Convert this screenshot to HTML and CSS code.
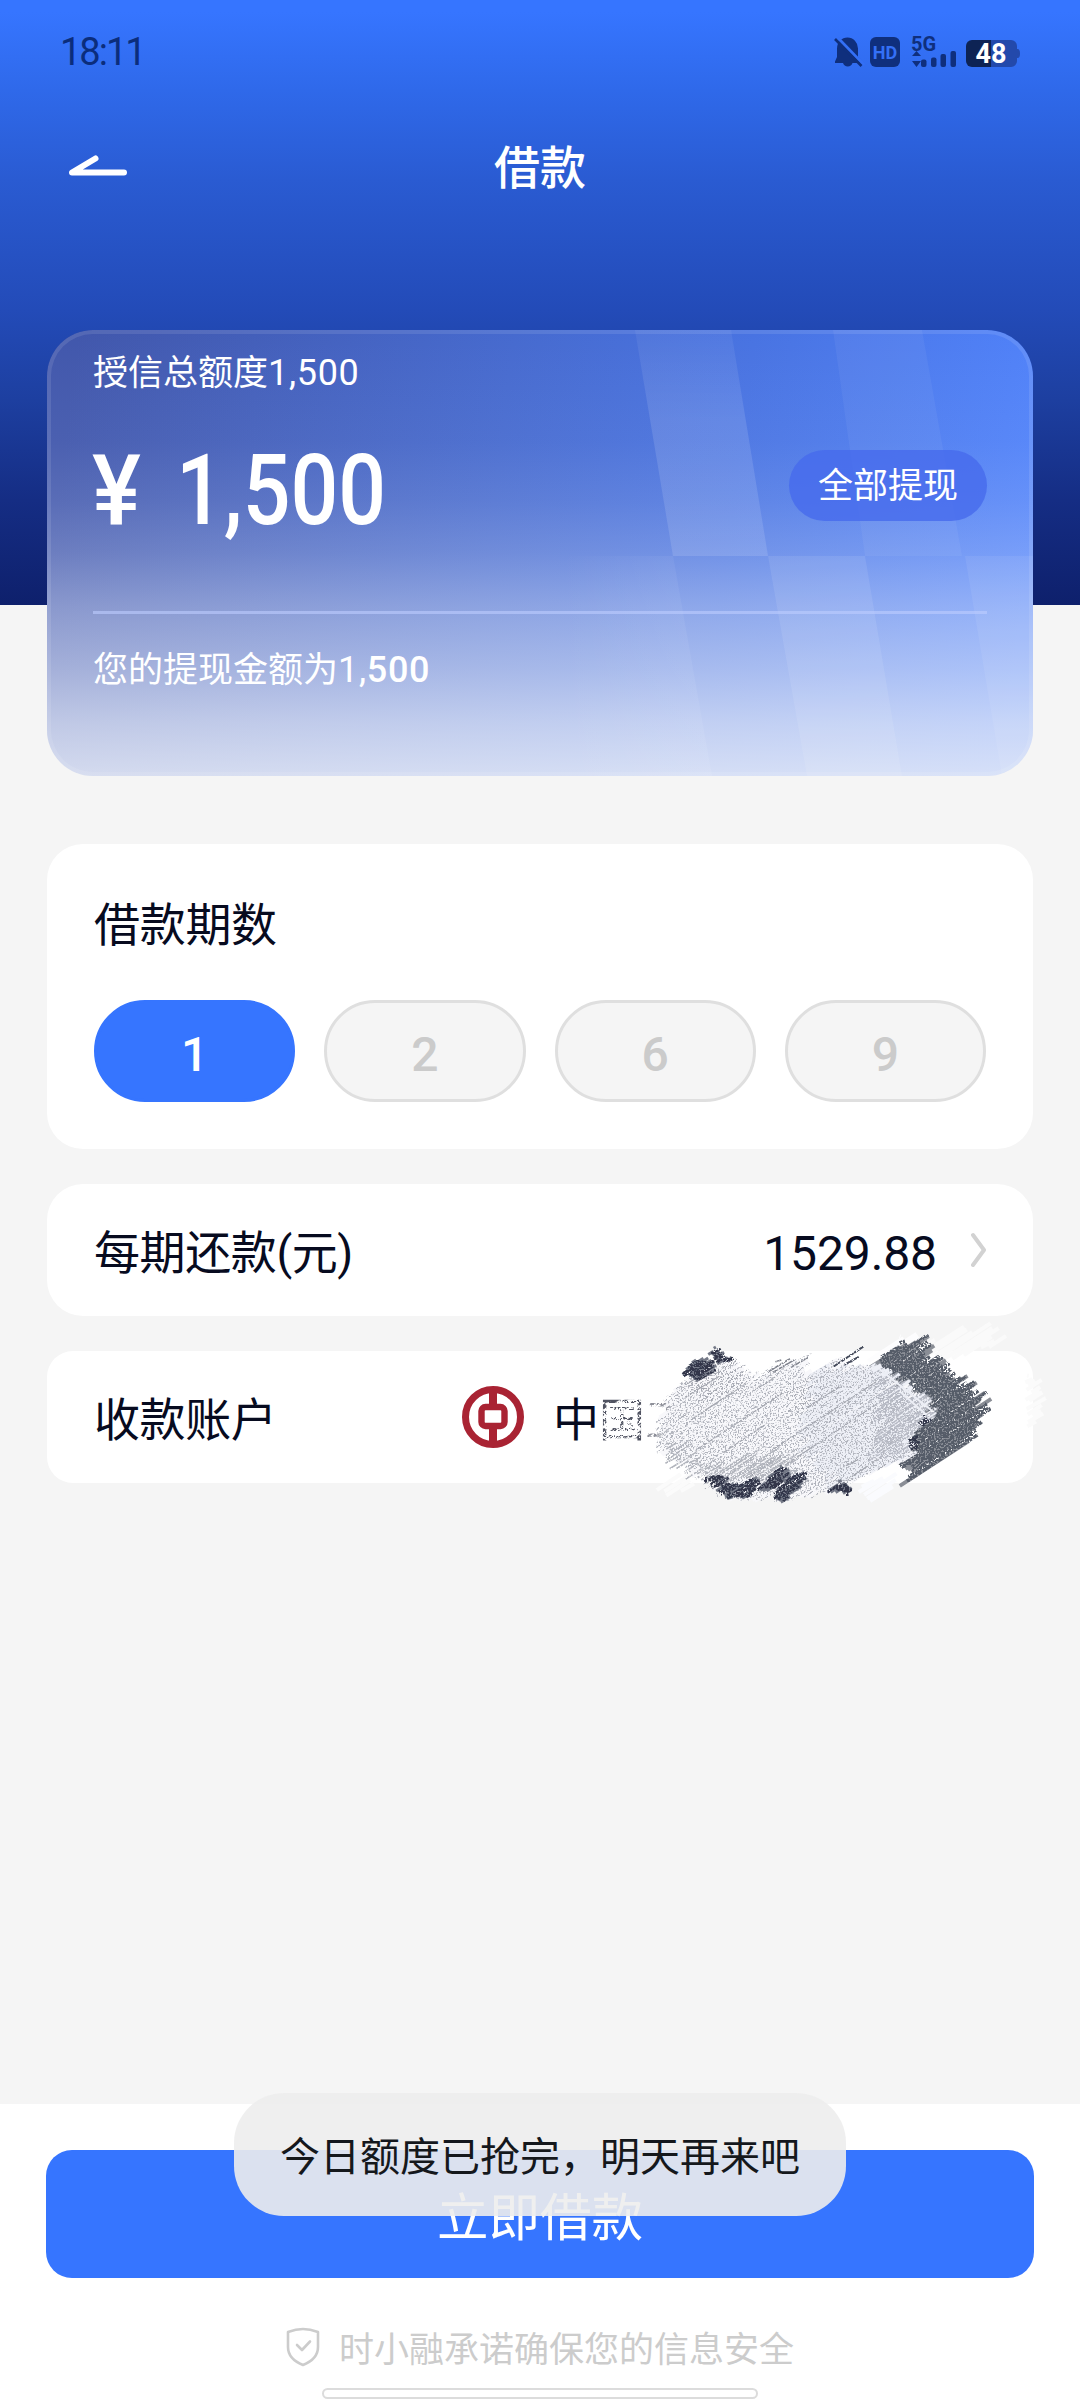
FILE: index.html
```html
<!DOCTYPE html>
<html lang="zh-CN">
<head>
<meta charset="utf-8">
<title>借款</title>
<link rel="stylesheet" href="styles.css">
</head>
<body>
<div class="screen">
  <header class="hero">
    <div class="status">
      <span class="time">18:11</span>
      <svg class="status-icons" viewBox="0 -8 190 52" width="190" height="52">
        <g fill="#0f2f7d">
          <path d="M6 23V14.500A10.500 11 0 0 1 27 14.500V23L30 27.500V29H21.500A5 5 0 0 1 12 29H4V27.500Z"/>
          <rect x="39" y="3" width="30" height="30" rx="6"/>
          <path d="M81 22l4.500-5 4.500 5zM81 27h9l-4.500 6z"/>
          <rect x="90" y="25.500" width="5.500" height="7.500" rx="2"/>
          <rect x="100" y="23.500" width="5.500" height="9.500" rx="2"/>
          <rect x="109.500" y="20" width="5.500" height="13" rx="2"/>
          <rect x="119.500" y="17" width="5.500" height="16" rx="2"/>
          <path d="M141 6h19.500v27H141a6 6 0 0 1-6-6V12a6 6 0 0 1 6-6z" fill="#0d2354"/>
          <path d="M160.500 6H180a6 6 0 0 1 6 6v3h0.500q2.500 0 2.500 4.500t-2.500 4.500H186v3a6 6 0 0 1-6 6h-19.500z" fill="#2349ab"/>
        </g>
        <path d="M6.500 3.500L33 31" stroke="#3470f6" stroke-width="3"/>
        <path d="M4 5L30.500 32" stroke="#0f2f7d" stroke-width="2.600"/>
        <text x="54" y="24.500" class="hd">HD</text>
        <text x="80" y="16.500" class="net">5G</text>
        <text x="160" y="29" class="batt">48</text>
      </svg>
    </div>
    <nav class="nav">
      <svg class="back" viewBox="0 0 60 24" width="60" height="24"><path d="M56 18.500H4L27.500 4.500" fill="none" stroke="#fff" stroke-width="6" stroke-linecap="round" stroke-linejoin="round"/></svg>
      <h1>借款</h1>
    </nav>
  </header>

  <main class="content">
    <section class="quota">
      <svg class="quota-deco" viewBox="47 330 986 446" width="986" height="446">
        <defs><linearGradient id="fade" x2="0" y2="1"><stop stop-color="#fff" stop-opacity=".05"/><stop offset=".4" stop-color="#fff" stop-opacity=".12"/><stop offset="1" stop-color="#fff" stop-opacity=".12"/></linearGradient>
        <linearGradient id="fadeL"><stop stop-color="#fff" stop-opacity="0"/><stop offset="1" stop-color="#fff" stop-opacity=".07"/></linearGradient></defs>
        <path d="M635 330H731L768 556H673Z" fill="url(#fade)"/>
        <path d="M833 330H922L962 556H865Z" fill="#fff" opacity=".05"/>
        <path d="M560 556H673L712 776H560Z" fill="url(#fadeL)"/>
        <path d="M768 556H865L902 776H807Z" fill="#fff" opacity=".09"/>
        <path d="M965 556H1033V776H1002Z" fill="#fff" opacity=".07"/>
      </svg>
      <p class="quota-total">授信总额度<span class="fig">1,500</span></p>
      <div class="quota-row">
        <p class="amount"><span class="yen">¥</span><span class="num">1,500</span></p>
        <span class="all">全部提现</span>
      </div>
      <p class="quota-note">您的提现金额为<span class="fig">1,<b>500</b></span></p>
    </section>

    <section class="card terms">
      <h2>借款期数</h2>
      <div class="options">
        <span class="option on">1</span>
        <span class="option">2</span>
        <span class="option">6</span>
        <span class="option">9</span>
      </div>
    </section>

    <section class="card row">
      <span class="label">每期还款(元)</span>
      <span class="value">1529.88</span>
      <svg class="chev" viewBox="0 0 16 36" width="16" height="36"><path d="M2 3L13 18L2 33" fill="none" stroke="#d2d2d2" stroke-width="4" stroke-linecap="round" stroke-linejoin="round"/></svg>
    </section>

    <section class="card row account">
      <span class="label">收款账户</span>
      <svg class="bank" viewBox="0 0 62 62" width="62" height="62">
        <g fill="none" stroke="#a92333"><circle cx="31" cy="31" r="27.500" stroke-width="7"/><rect x="19.500" y="21" width="23" height="19" rx="4" stroke-width="6.400"/><path d="M31 5V19M31 41V57" stroke-width="8"/></g>
      </svg>
      <span class="bankname">中<span class="worn">国</span><span class="faint">工</span></span>
      <svg class="scribble" id="scribble" viewBox="590 1310 470 200" width="470" height="200">
        <defs>
          <filter id="grain" x="0" y="0" width="1" height="1"><feTurbulence type="fractalNoise" baseFrequency=".55" numOctaves="2" seed="4"/><feColorMatrix values="0 0 0 0 0 0 0 0 0 0 0 0 0 0 0 9 0 0 0 -3.400"/><feComposite in="SourceGraphic" operator="in"/></filter>
          <filter id="sparse" x="0" y="0" width="1" height="1"><feTurbulence type="fractalNoise" baseFrequency=".6" numOctaves="3" seed="9"/><feColorMatrix values="0 0 0 0 0 0 0 0 0 0 0 0 0 0 0 7 0 0 0 -3.500"/><feComposite in="SourceGraphic" operator="in"/></filter>
        </defs>
      </svg>
    </section>
  </main>

  <footer class="bottom">
    <div class="submit">立即借款</div>
    <div class="promise">
      <svg viewBox="0 0 34 40" width="34" height="40"><g fill="none" stroke="#ccc" stroke-width="2.600" stroke-linejoin="round" stroke-linecap="round"><path d="M17 2Q24 2 32 5V20Q32 32 17 38Q2 32 2 20V5Q10 2 17 2Z"/><path d="M11 18L16 23L24 14.500"/></g></svg>
      <span>时小融承诺确保您的信息安全</span>
    </div>
    <div class="toast">今日额度已抢完，明天再来吧</div>
    <div class="homebar"></div>
  </footer>
</div>
<script src="scribble.js"></script>
</body>
</html>
```
FILE: styles.css
```css
* { box-sizing: border-box; margin: 0; padding: 0; }
body { width: 1080px; height: 2400px; background: #f5f5f5; color: #070b1f; font-family: Roboto, "Noto Sans CJK SC", sans-serif; overflow: hidden; }
.screen { display: flex; flex-direction: column; height: 2400px; }

.hero { height: 605px; flex: none; background: linear-gradient(#3675ff 0, #3675ff 12px, #2f69ea 90px, #2a5bd2 180px, #234bb8 310px, #1d3fa0 400px, #152d84 500px, #0e206c 605px); }
.status { display: flex; justify-content: space-between; align-items: center; height: 104px; padding: 0 59px 0 60px; }
.status-icons { overflow: visible; }
.time { font-size: 38px; line-height: 40px; letter-spacing: -2px; color: #0b2d7c; }
.hd { font: 700 18px Roboto, sans-serif; fill: #3470f6; text-anchor: middle; }
.net { font: 700 20px Roboto, sans-serif; fill: #0f2f7d; }
.batt { font: 700 27px Roboto, sans-serif; fill: #fff; text-anchor: middle; }
.nav { display: grid; grid-template-columns: 1fr auto 1fr; align-items: center; height: 124px; padding: 0 68px; }
.nav h1 { padding-top: 4px; font-size: 46px; font-weight: 500; line-height: 60px; color: #fff; }

.content { display: flex; flex-direction: column; gap: 35px; flex: 1; margin-top: -275px; padding: 0 47px; }

.quota { position: relative; height: 446px; margin-bottom: 33px; padding: 0 46px; border-radius: 46px; overflow: hidden; color: #fff;
  background: linear-gradient(rgba(234,238,248,0) 0, rgba(234,238,248,.06) 25%, rgba(234,238,248,.14) 38%, rgba(234,238,248,.26) 50%, rgba(234,238,248,.43) 62%, rgba(234,238,248,.59) 76%, rgba(234,238,248,.75) 88%, rgba(234,238,248,.87) 100%),
  linear-gradient(97deg, #4157ac 3%, #466acf 45%, #4873e2 68%, #5082fa 97%);
  box-shadow: inset 0 0 0 4px rgba(255,255,255,.1); }
.quota-deco { position: absolute; inset: 0; }
.quota > p, .quota-row { position: relative; }
.quota-total { padding-top: 18px; font-size: 35px; line-height: 50px; }
.quota-row { display: flex; justify-content: space-between; align-items: center; height: 212px; padding-bottom: 47px; }
.quota-note { padding-top: 31px; border-top: 3px solid rgba(190,205,255,.6); font-size: 35px; line-height: 50px; }
.quota-note b { font-weight: 500; }
.fig { font-size: 36px; letter-spacing: .700px; }
.amount { display: flex; padding-top: 16px; font-size: 99px; font-weight: 500; line-height: 100px; }
.yen { width: 84px; transform: scaleX(.93); transform-origin: 0 0; margin-left: -1px; }
.num { transform: scaleX(.85); transform-origin: 0 0; }
.all { display: flex; align-items: center; justify-content: center; width: 198px; height: 71px; margin-top: 7px; padding-top: 4px; border-radius: 36px; background: rgba(70,106,236,.8); font-size: 35px; line-height: 50px; }

.card { background: #fff; border-radius: 36px; }
.terms { height: 305px; padding: 51px 47px 0 47px; }
.terms h2 { font-size: 46px; font-weight: 400; line-height: 60px; letter-spacing: -.300px; }
.options { display: flex; gap: 29px; margin-top: 45px; }
.option { flex: 1; height: 102px; border: 3px solid #dfdfdf; border-radius: 51px; background: #f5f5f5; color: #cbcbcb; font-size: 48px; font-weight: 500; line-height: 103px; text-align: center; }
.option.on { border-color: #3675ff; background: #3675ff; color: #fff; }

.row { position: relative; display: flex; align-items: center; height: 132px; padding: 5px 46px 0 47px; font-size: 46px; line-height: 60px; }
.row svg { margin-top: -5px; }
.label { width: 276px; letter-spacing: -.400px; white-space: nowrap; }
.value { margin-left: auto; padding-top: 2px; font-size: 48px; letter-spacing: -.100px; }
.chev { margin-left: 34px; }
.account { border-radius: 26px; }
.bank { margin-left: 92px; }
.bankname { margin-left: 29px; }
.worn { opacity: .7; }
.faint { opacity: .45; }
.row .scribble { position: absolute; left: 543px; top: -41px; margin-top: 0; }

.bottom { position: relative; display: flex; flex-direction: column; height: 296px; flex: none; padding: 46px 46px 0; background: #fff; }
.submit { height: 128px; padding-top: 34px; border-radius: 26px; background: #3675ff; color: #fff; font-size: 51.500px; font-weight: 400; line-height: 70px; text-align: center; }
.promise { display: flex; align-items: center; justify-content: center; gap: 19px; margin-top: 43px; color: #ccc; font-size: 35px; line-height: 50px; }
.promise svg { margin-top: -4px; }
.promise span { padding-top: 5px; }
.toast { position: absolute; left: 234px; top: -11px; width: 612px; height: 123px; border-radius: 50px; background: rgba(237,237,237,.9); color: #15181c; font-size: 40px; line-height: 130px; text-align: center; white-space: nowrap; }
.homebar { position: absolute; left: 322px; bottom: 1px; width: 436px; height: 11px; border: 2px solid #dcdcdc; border-radius: 6px; background: #fff; }
```
FILE: scribble.js
```js
// Hatches polygons with jittered diagonal strokes to form the pencil scribble over the account number.
(function () {
  var svg = document.getElementById('scribble');
  var NS = 'http://www.w3.org/2000/svg';
  var seed = 7;
  function rnd() { seed = (seed * 16807) % 2147483647; return seed / 2147483647; }
  function hatch(pts, color, opt) {
    var a = (opt.angle || -34) * Math.PI / 180, c = Math.cos(a), s = Math.sin(a);
    var p = pts.map(function (q) { return [q[0] * c + q[1] * s, -q[0] * s + q[1] * c]; });
    var ys = p.map(function (q) { return q[1]; });
    var d = '';
    for (var y = Math.min.apply(0, ys); y < Math.max.apply(0, ys); y += opt.step * (.6 + .8 * rnd())) {
      var xs = [];
      for (var i = 0; i < p.length; i++) {
        var u = p[i], v = p[(i + 1) % p.length];
        if ((u[1] <= y) !== (v[1] <= y)) xs.push(u[0] + (y - u[1]) / (v[1] - u[1]) * (v[0] - u[0]));
      }
      xs.sort(function (m, n) { return m - n; });
      for (var k = 0; k + 1 < xs.length; k += 2) {
        var x1 = xs[k] - rnd() * opt.jit + opt.jit / 2, x2 = xs[k + 1] + rnd() * opt.jit - opt.jit / 2;
        if (opt.skip) { var len = x2 - x1; x1 += len * rnd() * opt.skip; x2 -= len * rnd() * opt.skip; }
        var y2 = y + rnd() * 2;
        if (x2 > x1) d += 'M' + (x1 * c - y * s).toFixed(1) + ' ' + (x1 * s + y * c).toFixed(1) + 'L' + (x2 * c - y2 * s).toFixed(1) + ' ' + (x2 * s + y2 * c).toFixed(1);
      }
    }
    var e = document.createElementNS(NS, 'path');
    e.setAttribute('d', d); e.setAttribute('stroke', color); e.setAttribute('fill', 'none');
    e.setAttribute('stroke-width', opt.w);
    if (opt.filter) e.setAttribute('filter', 'url(#' + opt.filter + ')');
    svg.appendChild(e);
  }
  var right = [[872,1367],[898,1344],[922,1337],[930,1356],[942,1362],[955,1376],[977,1390],[985,1408],[975,1436],[906,1483],[904,1440],[931,1416],[922,1396]];
  var mid = [[671,1393],[688,1377],[729,1360],[757,1378],[770,1368],[805,1357],[808,1374],[832,1360],[850,1366],[876,1367],[922,1398],[931,1420],[908,1432],[912,1456],[884,1466],[836,1490],[781,1499],[733,1497],[705,1480],[661,1449],[662,1420]];
  // pale smears past the card's edges
  hatch([[910,1352],[960,1326],[985,1326],[1002,1342],[960,1354]], '#fafafa', { step: 4, w: 4, jit: 20 });
  hatch([[870,1360],[900,1336],[925,1334],[900,1356]], '#fdfdfe', { step: 4, w: 4, jit: 8 });
  hatch([[1028,1375],[1040,1382],[1044,1410],[1030,1430]], '#fbfbfb', { step: 4, w: 4, jit: 8 });
  hatch([[655,1485],[695,1470],[690,1486],[666,1500]], '#fbfbfb', { step: 4, w: 4, jit: 12 });
  hatch([[855,1485],[900,1472],[890,1490],[876,1502]], '#fafbfe', { step: 4, w: 4, jit: 8 });
  // blank dust over the clipped characters
  hatch([[604,1402],[640,1396],[640,1438],[604,1440]], '#fff', { step: 3, w: 3, jit: 6, filter: 'grain' });
  hatch([[643,1398],[668,1396],[668,1442],[643,1440]], '#fff', { step: 3, w: 2.600, jit: 4, filter: 'grain' });
  hatch(right, '#8a8e96', { step: 3.600, w: 3.900, jit: 20 });
  hatch(right, '#555b68', { step: 2.800, w: 3.700, jit: 18, filter: 'grain' });
  hatch(mid, '#f8f8fb', { step: 2.400, w: 3.400, jit: 12 });
  hatch([[815,1368],[876,1367],[922,1398],[931,1420],[908,1432],[912,1456],[884,1466],[836,1486],[800,1440]], '#eef0f7', { step: 2.600, w: 3.200, jit: 18 });
  hatch(mid, '#b0b3bc', { step: 1.800, w: 2, jit: 18, filter: 'sparse' });
  hatch(mid, '#a2a5ae', { step: 8, w: 1.300, jit: 14, skip: .8, filter: 'grain' });
  hatch([[682,1388],[700,1378],[730,1362],[752,1378],[735,1394],[706,1400]], '#a4a7b0', { step: 2.200, w: 2, jit: 20, filter: 'sparse' });
  hatch([[876,1370],[920,1398],[932,1420],[908,1434],[910,1454],[872,1464],[880,1420]], '#b6b9c4', { step: 2.400, w: 1.700, jit: 24, filter: 'grain' });
  hatch([[872,1368],[882,1368],[934,1408],[926,1414]], '#eceef5', { angle: 38, step: 4, w: 2, jit: 14 });
  hatch([[661,1434],[690,1452],[730,1462],[760,1450],[800,1455],[790,1480],[712,1484],[664,1452]], '#b2b5bd', { step: 3, w: 1.600, jit: 24, filter: 'grain' });
  hatch([[785,1385],[808,1380],[816,1404],[795,1408]], '#a4a7b0', { step: 2.400, w: 1.800, jit: 20, filter: 'sparse' });
  var dark = '#30364a', ink = '#747987';
  [[[684,1373],[694,1358],[712,1360],[718,1368],[700,1380]],
   [[706,1354],[714,1348],[731,1359],[724,1364]],
   [[705,1478],[718,1475],[740,1488],[730,1498]],
   [[731,1494],[750,1476],[760,1482],[745,1500]],
   [[759,1488],[779,1467],[790,1472],[774,1490]],
   [[771,1498],[790,1476],[808,1470],[802,1483],[784,1502]],
   [[828,1490],[838,1482],[852,1490],[846,1495]]].forEach(function (q) {
    hatch(q, ink, { step: 3, w: 3, jit: 8 });
    hatch(q, dark, { step: 2.400, w: 3, jit: 8, filter: 'grain' });
  });
  hatch([[768,1372],[778,1360],[808,1356],[800,1366]], '#80848e', { step: 5, w: 1.600, jit: 10, filter: 'grain' });
  hatch([[822,1370],[838,1358],[864,1346],[858,1360]], '#454b5b', { step: 4.500, w: 2, jit: 12, filter: 'grain' });
  hatch([[908,1442],[914,1434],[921,1440],[914,1452]], dark, { step: 2.600, w: 2.600, jit: 4, filter: 'grain' });
  hatch([[918,1422],[924,1416],[931,1420],[924,1426]], dark, { step: 2.600, w: 2.600, jit: 3, filter: 'grain' });
})();
```
